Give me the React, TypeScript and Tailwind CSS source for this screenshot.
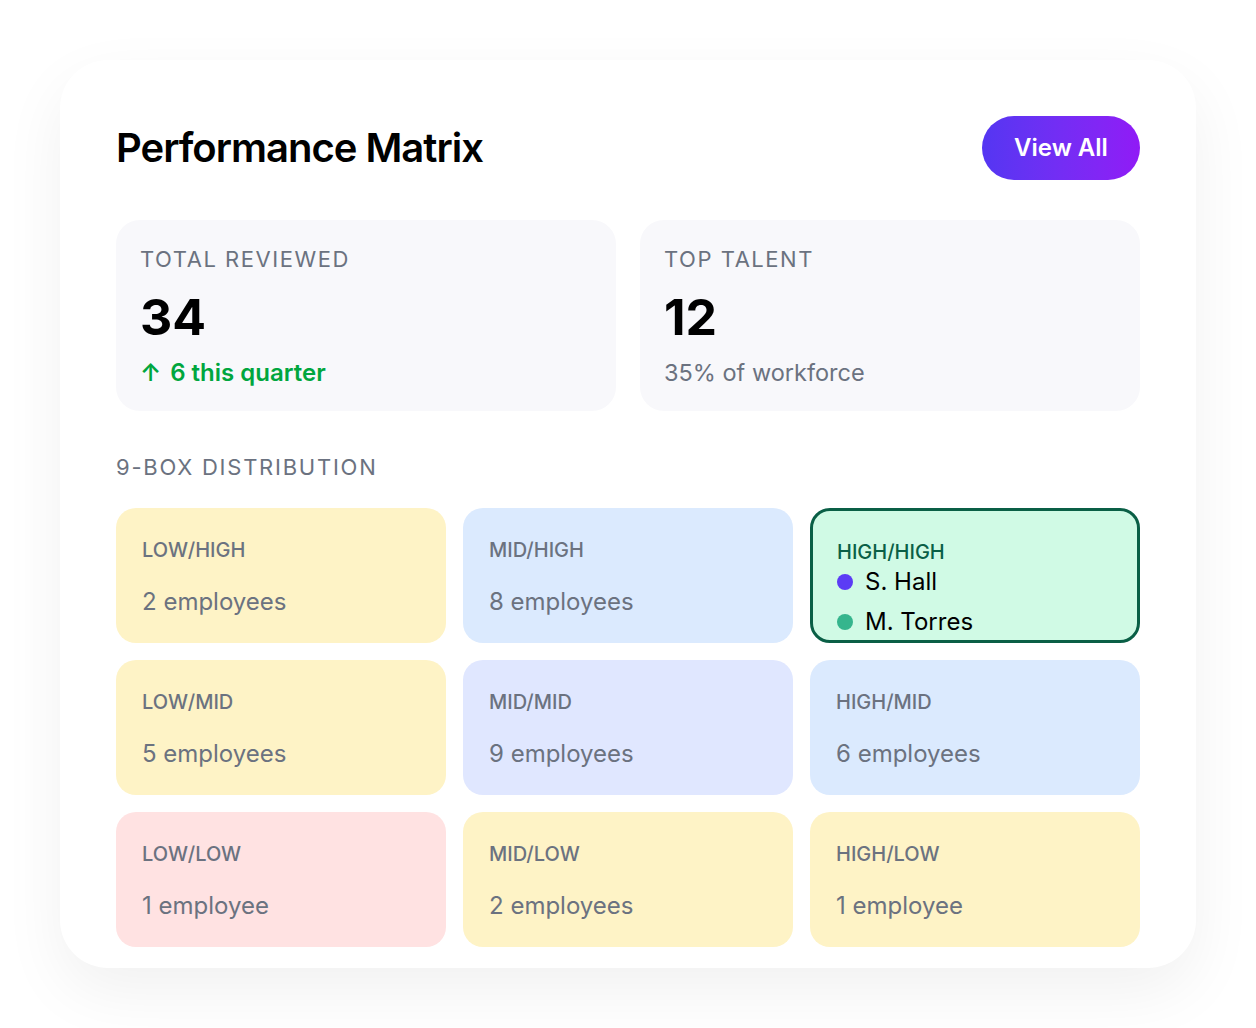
import React from 'react';

type Cell = {
  label: string;
  count?: string;
  bg: string;
  names?: { name: string; dot: string }[];
};

const cells: Cell[] = [
  { label: 'LOW/HIGH', count: '2 employees', bg: 'bg-[#fef3c6]' },
  { label: 'MID/HIGH', count: '8 employees', bg: 'bg-[#dbeafe]' },
  {
    label: 'HIGH/HIGH',
    bg: 'bg-[#d0fae5]',
    names: [
      { name: 'S. Hall', dot: 'bg-[#5b3cf5]' },
      { name: 'M. Torres', dot: 'bg-[#35b58d]' },
    ],
  },
  { label: 'LOW/MID', count: '5 employees', bg: 'bg-[#fef3c6]' },
  { label: 'MID/MID', count: '9 employees', bg: 'bg-[#e0e7ff]' },
  { label: 'HIGH/MID', count: '6 employees', bg: 'bg-[#dbeafe]' },
  { label: 'LOW/LOW', count: '1 employee', bg: 'bg-[#ffe2e2]' },
  { label: 'MID/LOW', count: '2 employees', bg: 'bg-[#fef3c6]' },
  { label: 'HIGH/LOW', count: '1 employee', bg: 'bg-[#fef3c6]' },
];

function StatCard({ label, value, children }: { label: string; value: string; children: React.ReactNode }) {
  return (
    <div className="rounded-3xl bg-[#f8f8fb] px-6 pb-[22px] pt-[25px]">
      <div className="text-[22px] leading-7 tracking-[0.07em] text-[#6b7280]">{label}</div>
      <div className="mt-[19px] text-[50px] font-bold leading-[50px] text-black">{value}</div>
      <div className="mt-[15px] text-2xl leading-8">{children}</div>
    </div>
  );
}

function MatrixCell({ cell }: { cell: Cell }) {
  if (cell.names) {
    return (
      <div className={`h-[135px] rounded-[20px] border-[3px] border-[#0a5f46] ${cell.bg} pl-6 pt-[27px]`}>
        <div className="text-[20px] font-medium leading-7 text-[#0a5f46]">{cell.label}</div>
        <div className="flex flex-col gap-2">
          {cell.names.map((n) => (
            <div key={n.name} className="flex items-center gap-3">
              <span className={`h-4 w-4 rounded-full ${n.dot}`} />
              <span className="text-2xl leading-8 text-black">{n.name}</span>
            </div>
          ))}
        </div>
      </div>
    );
  }
  return (
    <div className={`flex h-[135px] flex-col gap-[22px] rounded-[20px] ${cell.bg} pl-[26px] pt-[28px]`}>
      <div className="text-[20px] font-medium leading-7 text-[#6b7280]">{cell.label}</div>
      <div className="text-2xl leading-8 text-[#6b7280]">{cell.count}</div>
    </div>
  );
}

export default function App() {
  return (
    <div
      className="min-h-screen bg-white pl-[60px] pt-[60px]"
      style={{ fontFamily: 'Inter, "Noto Sans", sans-serif' }}
    >
      <div className="h-[908px] w-[1136px] rounded-[48px] bg-white px-14 pt-14 shadow-[0_24px_64px_rgba(0,0,0,0.06)]">
        {/* Header */}
        <div className="flex items-center justify-between">
          <h1 className="text-[40px] font-semibold tracking-[-0.025em] text-black">Performance Matrix</h1>
          <button className="h-16 w-[158px] rounded-full bg-gradient-to-r from-[#5436f2] to-[#901af6] text-2xl font-semibold text-white">
            View All
          </button>
        </div>

        {/* Stats */}
        <div className="mt-10 grid grid-cols-2 gap-6">
          <StatCard label="TOTAL REVIEWED" value="34">
            <span className="font-semibold text-[#00a63e]">
              <span className="mr-[3px]">↑</span> 6 this quarter
            </span>
          </StatCard>
          <StatCard label="TOP TALENT" value="12">
            <span className="text-[23.5px] text-[#6b7280]">35% of workforce</span>
          </StatCard>
        </div>

        {/* 9-box */}
        <div className="mt-10 text-[22px] leading-8 tracking-[0.08em] text-[#6b7280]">9-BOX DISTRIBUTION</div>
        <div className="mt-[25px] grid grid-cols-3 gap-[17px]">
          {cells.map((c) => (
            <MatrixCell key={c.label} cell={c} />
          ))}
        </div>
      </div>
    </div>
  );
}
